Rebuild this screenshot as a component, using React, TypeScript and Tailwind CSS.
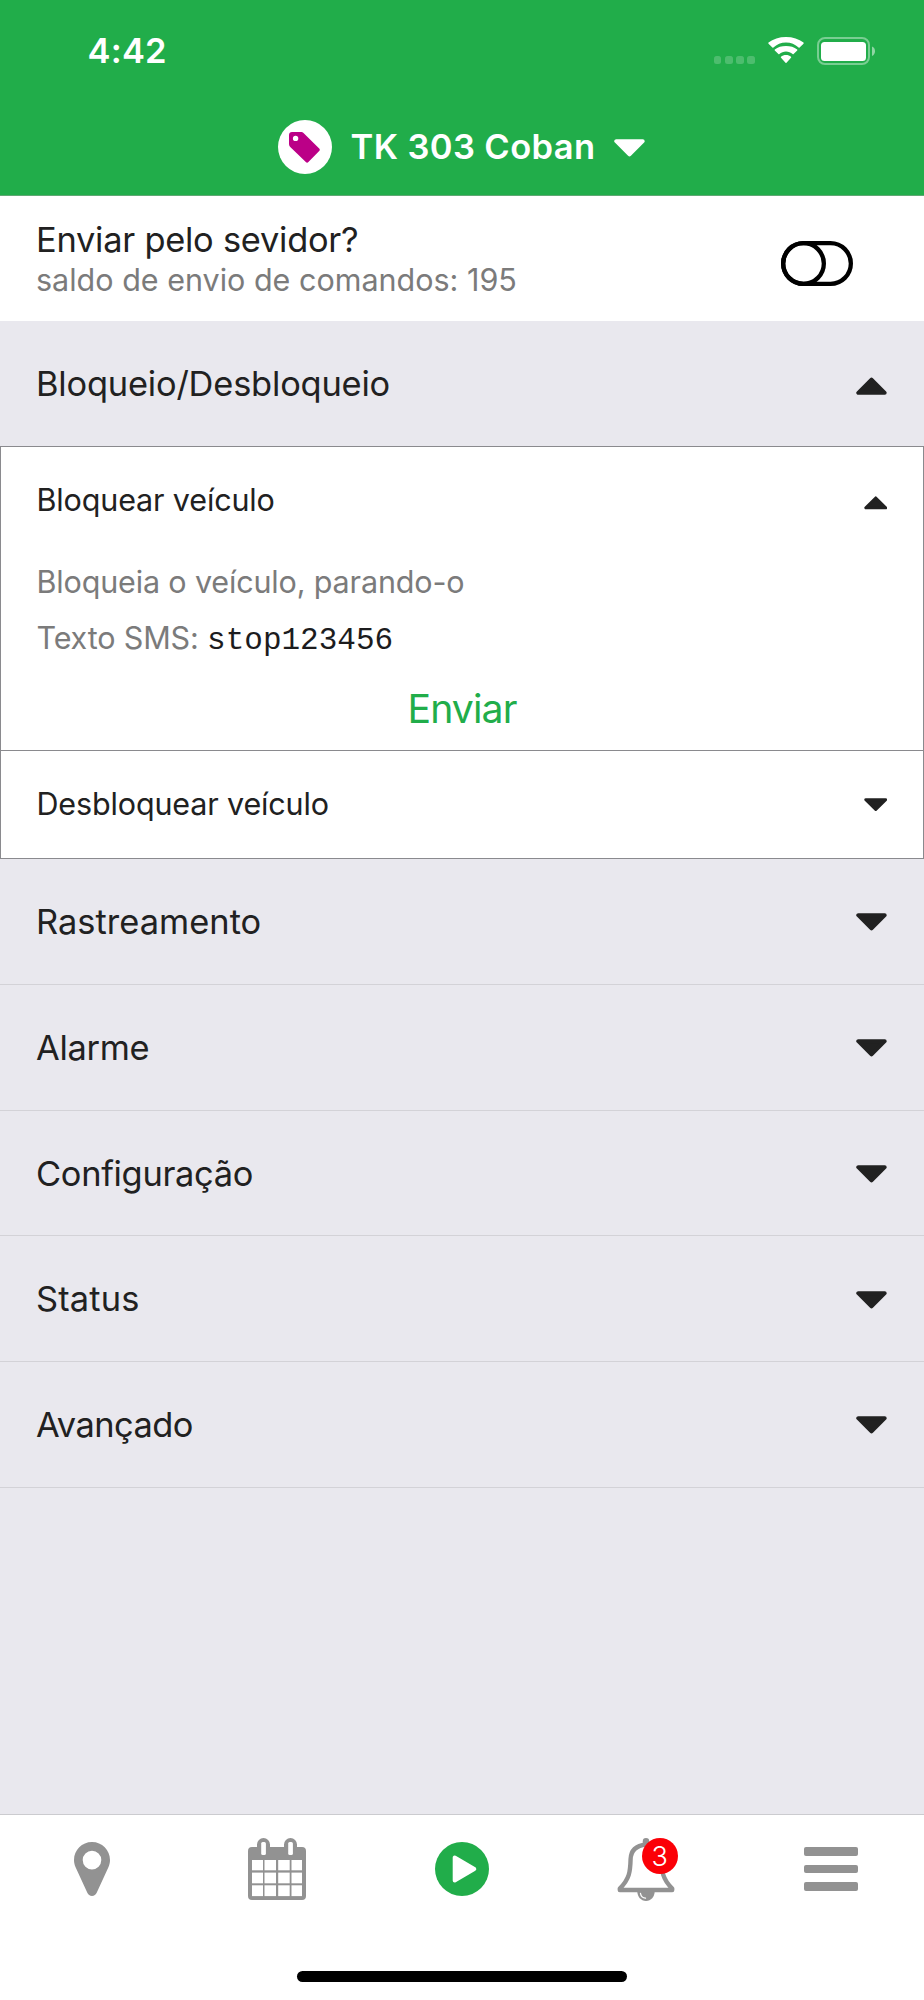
import React from "react";

function Caret({ up = false, className }: { up?: boolean; className: string }) {
  return (
    <svg viewBox="0 0 31 18" className={className} fill="currentColor" stroke="currentColor" strokeWidth="4" strokeLinejoin="round">
      <path d={up ? "M2.3 15.8H28.7L15.5 2.6Z" : "M2.3 2.2H28.7L15.5 15.4Z"} />
    </svg>
  );
}

function StatusBar() {
  return (
    <div className="flex h-[101px] items-center justify-between pl-[87.5px] pr-[48px] text-white">
      <span className="mt-[2px] text-[34.5px] font-semibold leading-none tracking-[0.2px]">4:42</span>
      <div className="flex items-center">
        <div className="mr-[13px] mt-[19px] flex gap-[3.5px]">
          {[0, 1, 2, 3].map((i) => (
            <span key={i} className="h-[7.5px] w-[7.7px] rounded-[2.5px] bg-white/20" />
          ))}
        </div>
        <svg viewBox="0 0 36 27" className="mr-[13px] h-[27px] w-[36px]" fill="white">
          <path d="M18 5.6c4.9 0 9.3 1.9 12.6 5 .3.3.7.3 1 0l3.9-3.9c.3-.3.3-.8 0-1.1C30.9 2 24.8 0 18 0S5.1 2 .5 5.6c-.3.3-.3.8 0 1.1l3.9 3.9c.3.3.7.3 1 0C8.7 7.5 13.1 5.6 18 5.6Z" />
          <path d="M18 14.6c2.5 0 4.8.9 6.6 2.5.3.3.7.3 1 0l3.6-3.5c.3-.3.3-.8 0-1.1C26.2 10 22.3 8.9 18 8.9S9.8 10 6.8 12.5c-.3.3-.3.8 0 1.1l3.6 3.5c.3.3.7.3 1 0C13.2 15.5 15.5 14.6 18 14.6Z" />
          <path d="M23 20.8c.3-.3.3-.8 0-1C21.7 18.7 20 18.1 18 18.1s-3.7.6-5 1.7c-.3.2-.3.7 0 1l4.5 5c.3.3.7.3 1 0Z" />
        </svg>
        <svg viewBox="0 0 59 28" className="h-[28px] w-[59px]">
          <rect x="1" y="1" width="51" height="26" rx="7" fill="none" stroke="white" strokeOpacity="0.4" strokeWidth="2" />
          <rect x="4" y="5" width="45" height="19" rx="3.5" fill="white" />
          <path d="M55 9.5c2 .8 3 2.6 3 4.7s-1 3.9-3 4.7Z" fill="white" fillOpacity="0.5" />
        </svg>
      </div>
    </div>
  );
}

function Header() {
  return (
    <header className="h-[196px] shrink-0 border-b border-[#5fa873] bg-[#21ad4a]">
      <StatusBar />
      <div className="flex h-[92px] items-center justify-center pr-px text-white">
        <span className="flex size-[54px] items-center justify-center rounded-full bg-white">
          <svg viewBox="0 0 31 31" className="mr-[1px] size-[31px]">
            <path
              fillRule="evenodd"
              fill="#bb0087"
              d="M3 0H11.5C13 0 14 .5 15 1.4L30.2 16.5C31 17.3 31 18.2 30.2 19L19.4 30.1C18.6 30.9 17.6 30.9 16.8 30.1L1.5 15.3C.5 14.3 0 13.2 0 11.8V3C0 1.2 1.2 0 3 0ZM6.6 3.7a2.7 2.7 0 1 0 0 5.4a2.7 2.7 0 1 0 0-5.4Z"
            />
          </svg>
        </span>
        <h1 className="ml-[18px] whitespace-nowrap text-[34.5px] font-semibold leading-none tracking-[0.4px]">TK 303 Coban</h1>
        <Caret className="ml-[18px] mt-[2px] h-[18px] w-[31px]" />
      </div>
    </header>
  );
}

function ServerRow() {
  return (
    <div className="flex h-[125px] shrink-0 items-center justify-between bg-white pl-9 pr-[71px]">
      <div className="flex flex-col pt-[3px]">
        <span className="h-10 text-[34.4px] leading-10 tracking-[-0.24px]">Enviar pelo sevidor?</span>
        <span className="h-10 text-[30.5px] leading-10 text-[#7b7b7b]">saldo de envio de comandos: 195</span>
      </div>
      <svg viewBox="0 0 72 45" className="mt-[9px] h-[45px] w-[72px]" fill="none" stroke="black" strokeWidth="4.3">
        <rect x="2.15" y="2.15" width="67.7" height="40.7" rx="20.35" />
        <circle cx="22.5" cy="22.5" r="20.35" />
        <path d="M22 2.15H40L31 5ZM22 42.85H40L31 40Z" strokeWidth="1.5" fill="black" />
      </svg>
    </div>
  );
}

function Section({ title, open = false, tracking }: { title: string; open?: boolean; tracking: string }) {
  return (
    <div
      className={
        open
          ? "flex h-[125px] shrink-0 items-center justify-between px-9 pr-[37px] pt-[2px]"
          : "flex h-[125.75px] shrink-0 items-center justify-between border-b border-[#d3d2d7] px-9 pr-[37px] pt-[2px]"
      }
    >
      <span className={`text-[34.4px] leading-none ${tracking}`}>{title}</span>
      <Caret up={open} className={open ? "mt-[3px] h-[18px] w-[31px]" : "h-[18px] w-[31px]"} />
    </div>
  );
}

function CommandRow({ title, open = false }: { title: string; open?: boolean }) {
  return (
    <div className="flex h-[107px] items-center justify-between pl-[35.5px] pr-9">
      <span className="text-[30.5px] leading-none tracking-[-0.14px]">{title}</span>
      <Caret up={open} className={open ? "mt-[5px] h-[13.5px] w-[23.5px]" : "h-[13.5px] w-[23.5px]"} />
    </div>
  );
}

function Commands() {
  return (
    <div className="h-[413px] shrink-0 border border-[#8a8a8e] bg-white">
      <div className="h-[304px] border-b border-[#8a8a8e]">
        <CommandRow title="Bloquear veículo" open />
        <div className="pl-[35.5px] text-[30.5px] leading-[56px] tracking-[-0.15px] text-[#7b7b7b]">
          <p className="h-[56px]">Bloqueia o veículo, parando-o</p>
          <p className="flex h-[56px]">
            <span className="whitespace-pre">Texto SMS: </span>
            <code className="text-[31px] leading-[61px] tracking-normal text-[#1c1c1e] [font-family:'Liberation_Mono',monospace]">stop123456</code>
          </p>
        </div>
        <button className="flex h-[85px] w-full items-center justify-center text-[39.2px] leading-none tracking-[-0.9px] text-[#21ad4a]">Enviar</button>
      </div>
      <CommandRow title="Desbloquear veículo" />
    </div>
  );
}

function PinIcon() {
  return (
    <svg viewBox="0 0 36 54" className="h-[54px] w-[36px]" fill="#929292" fillRule="evenodd">
      <path d="M18 0C8 0 0 8 0 18C0 20.5.6 23 1.7 25.5L13.2 50.5C14.2 52.8 15.8 54 18 54S21.8 52.8 22.8 50.5L34.3 25.5C35.4 23 36 20.5 36 18C36 8 28 0 18 0ZM18 8.8a9.3 9.3 0 1 1 0 18.6a9.3 9.3 0 1 1 0-18.6Z" />
    </svg>
  );
}

function CalendarIcon() {
  const rows = [
    [22, 10.3],
    [34.6, 10.7],
    [47.3, 10.8],
  ];
  const columns = [
    [4, 11],
    [16.5, 11.5],
    [30.2, 11.5],
    [43.5, 10.5],
  ];
  return (
    <svg viewBox="0 0 58 62" className="h-[62px] w-[58px]">
      <path
        fill="#929292"
        d="M4 9H9V6.5A6.5 6.5 0 0 1 22 6.5V9H36V6.5A6.5 6.5 0 0 1 49 6.5V9H54A4 4 0 0 1 58 13V58A4 4 0 0 1 54 62H4A4 4 0 0 1 0 58V13A4 4 0 0 1 4 9Z"
      />
      <g fill="white">
        <rect x="13.2" y="4" width="4.7" height="13" rx="1.5" />
        <rect x="40.2" y="4" width="4.7" height="13" rx="1.5" />
        {rows.map(([y, h]) => columns.map(([x, w]) => <rect key={`${x}-${y}`} x={x} y={y} width={w} height={h} />))}
      </g>
    </svg>
  );
}

function PlayIcon() {
  return (
    <svg viewBox="0 0 54 54" className="size-[54px]">
      <circle cx="27" cy="27" r="27" fill="#21ad4a" />
      <path d="M19.7 15.5V38.5L39.3 27Z" fill="white" stroke="white" strokeWidth="4" strokeLinejoin="round" />
    </svg>
  );
}

function BellIcon() {
  return (
    <span className="relative mr-[1px] mt-px">
      <svg viewBox="0 0 58 63" className="h-[63px] w-[58px]" fill="none" stroke="#929292" strokeWidth="4.4" strokeLinejoin="round" strokeLinecap="round">
        <path d="M29 3.3V6" strokeWidth="6.5" />
        <path d="M29 6.5C19.5 7.5 14 12 13.6 21C13.3 33.5 12.5 41 2.8 50.5V52H55.2V50.5C45.5 41 44.7 33.5 44.4 21C44 12 38.5 7.5 29 6.5Z" />
        <path d="M20.3 53.5C20.3 58.5 24 63 29 63S37.7 58.5 37.7 53.5Z" fill="#929292" stroke="none" />
        <path d="M23.5 55.5C24 58.5 26 60 28.5 60.2" stroke="white" strokeWidth="1.3" />
      </svg>
      <span className="absolute left-[24.5px] top-0 flex size-[36px] items-center justify-center rounded-full bg-[#fb0007] text-[27px] font-light leading-none text-white">
        3
      </span>
    </span>
  );
}

function MenuIcon() {
  return (
    <span className="mr-px flex w-[54px] flex-col gap-[9px]">
      <span className="h-[8.7px] rounded-[2px] bg-[#929292]" />
      <span className="h-[8.7px] rounded-[2px] bg-[#929292]" />
      <span className="h-[8.7px] rounded-[2px] bg-[#929292]" />
    </span>
  );
}

function TabBar() {
  const tabs = [PinIcon, CalendarIcon, PlayIcon, BellIcon, MenuIcon];
  return (
    <nav className="flex h-[186px] shrink-0 flex-col items-center border-t border-[#cbcbcf] bg-white">
      <div className="grid h-[108px] w-full grid-cols-5">
        {tabs.map((Icon, i) => (
          <button key={i} className="flex items-center justify-center">
            <Icon />
          </button>
        ))}
      </div>
      <div className="mt-[48px] h-[11px] w-[330px] rounded-full bg-black" />
    </nav>
  );
}

export default function App() {
  return (
    <div className="flex h-[2000px] w-[924px] flex-col overflow-hidden bg-[#e9e8ee] text-[#212121] [font-family:Inter,'Liberation_Sans',sans-serif]">
      <Header />
      <ServerRow />
      <Section title="Bloqueio/Desbloqueio" tracking="tracking-[-0.18px]" open />
      <Commands />
      <main className="flex flex-1 flex-col">
        <Section title="Rastreamento" tracking="tracking-[0.04px]" />
        <Section title="Alarme" tracking="tracking-[-0.3px]" />
        <Section title="Configuração" tracking="tracking-[-0.3px]" />
        <Section title="Status" tracking="tracking-[0.15px]" />
        <Section title="Avançado" tracking="tracking-[-0.55px]" />
      </main>
      <TabBar />
    </div>
  );
}
